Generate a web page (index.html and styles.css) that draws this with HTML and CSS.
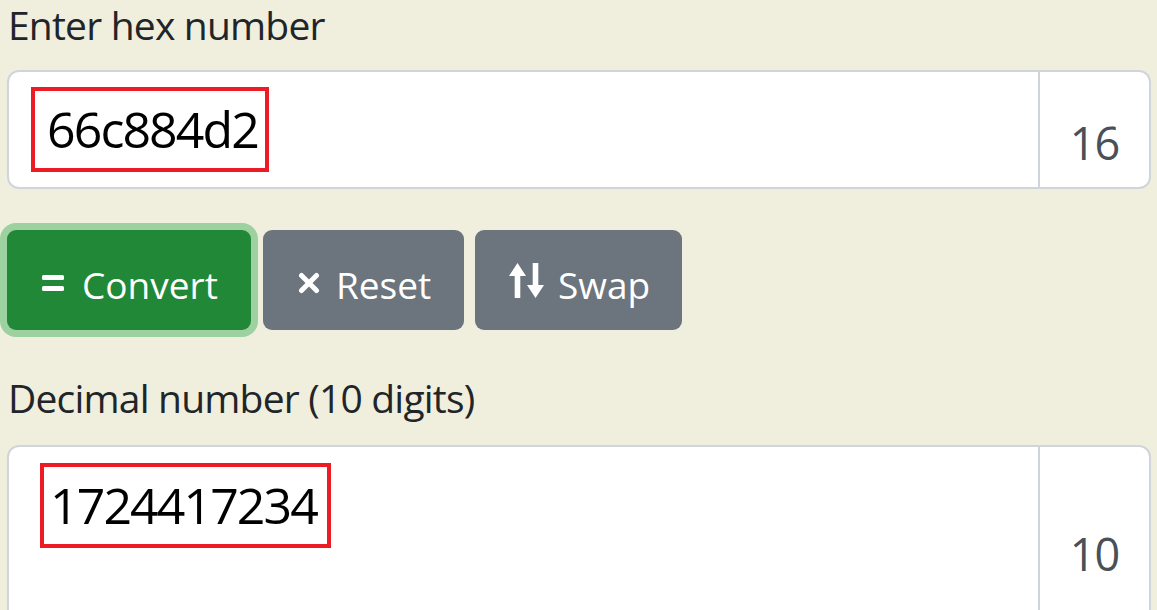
FILE: index.html
```html
<!DOCTYPE html>
<html lang="en">
<head>
<meta charset="utf-8">
<title>Hex to Decimal</title>
<link rel="stylesheet" href="styles.css">
</head>
<body>
<div class="app">
  <label class="lbl lbl-first">Enter hex number</label>
  <div class="igroup">
    <div class="field field-hex"><span class="mark mark-hex">66c884d2</span></div>
    <div class="append">16</div>
  </div>

  <div class="btns">
    <button class="btn btn-success" type="button">
      <svg class="ico ico-eq" viewBox="0 0 22 16" width="22" height="16"><rect x="0" y="0" width="22" height="5" rx="1.5"/><rect x="0" y="11" width="22" height="5" rx="1.5"/></svg>
      <span>Convert</span>
    </button>
    <button class="btn btn-secondary btn-reset" type="button">
      <svg class="ico ico-x" viewBox="0 0 22 22" width="22" height="22"><path d="M3.5 3.5 L18.5 18.5 M18.5 3.5 L3.5 18.5" stroke="#fff" stroke-width="5" stroke-linecap="round" fill="none"/></svg>
      <span>Reset</span>
    </button>
    <button class="btn btn-secondary btn-swap" type="button">
      <svg class="ico ico-swap" viewBox="0 0 35 35" width="35" height="35"><path d="M0 13 L8.5 0 L17 13 L11.3 13 L11.3 35 L5.7 35 L5.7 13 Z"/><path d="M18 22 L23.7 22 L23.7 0 L29.3 0 L29.3 22 L35 22 L26.5 35 Z"/></svg>
      <span>Swap</span>
    </button>
  </div>

  <label class="lbl lbl-second">Decimal number (10 digits)</label>
  <div class="igroup igroup-tall">
    <div class="field field-dec"><span class="mark mark-dec">1724417234</span></div>
    <div class="append">10</div>
  </div>
</div>
</body>
</html>
```

FILE: styles.css
```css
html, body {
  margin: 0;
  padding: 0;
}
body {
  background: #f0eedd;
  font-family: "Open Sans", "Noto Sans", sans-serif;
  color: #212529;
  overflow: hidden;
  height: 610px;
}
.app {
  padding: 0 6px 0 7px;
}
.lbl {
  display: block;
  font-size: 39px;
  line-height: 48px;
  letter-spacing: -0.8px;
  padding-left: 1px;
  color: #212529;
}
.lbl-first {
  margin-top: 1px;
  margin-bottom: 21px;
}
.lbl-second {
  margin-top: 44px;
  margin-bottom: 23px;
}
.igroup {
  display: flex;
  height: 119px;
}
.igroup-tall {
  height: 191px;
}
.field {
  flex: 1;
  box-sizing: border-box;
  background: #fff;
  border: 2px solid #d0d5db;
  border-radius: 12px 0 0 12px;
  color: #000;
  font-size: 50px;
}
.field-hex {
  padding: 15px 0 0 22px;
}
.field-dec {
  padding: 16px 0 0 31px;
}
.mark {
  display: inline-block;
  border: 4px solid #ed1c24;
  line-height: 77px;
  letter-spacing: -1.9px;
}
.mark-hex {
  padding: 0 7px 0 12px;
}
.mark-dec {
  padding: 0 10px 0 6px;
}
.append {
  width: 111px;
  box-sizing: border-box;
  background: #fff;
  border: 2px solid #d0d5db;
  border-left: none;
  border-radius: 0 12px 12px 0;
  display: flex;
  align-items: center;
  justify-content: center;
  padding-top: 26px;
  font-size: 45px;
  line-height: 45px;
  color: #495057;
  letter-spacing: -1px;
}
.btns {
  display: flex;
  gap: 11px;
  margin-top: 41px;
}
.btn {
  height: 100px;
  box-sizing: border-box;
  border: none;
  border-radius: 9px;
  color: #fff;
  font-family: "Open Sans", "Noto Sans", sans-serif;
  font-size: 37px;
  line-height: 38px;
  padding: 9px 33px 0 35px;
  display: inline-flex;
  align-items: center;
  gap: 16px;
}
.btn-success {
  background: #218838;
  box-shadow: 0 0 0 7px #9dd19f;
  width: 244px;
  margin-right: 1px;
  gap: 18px;
}
.btn-secondary {
  background: #6c757d;
}
.btn-reset {
  width: 201px;
}
.btn-swap {
  width: 207px;
  padding-left: 34px;
  gap: 14px;
}
.ico {
  fill: #fff;
  flex: none;
}
.ico-eq {
  margin-top: -4px;
}
.ico-x {
  margin-top: -4px;
}
.ico-swap {
  margin-top: -8px;
}
```
